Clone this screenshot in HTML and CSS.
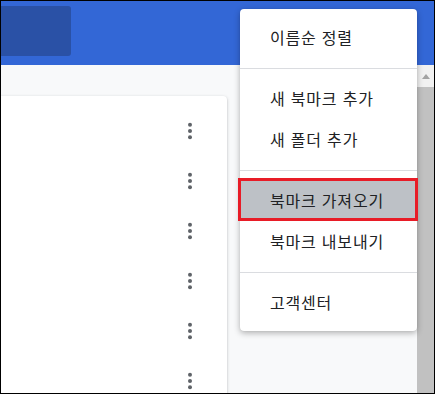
FILE: index.html
```html
<!DOCTYPE html>
<html lang="ko">
<head>
<meta charset="utf-8">
<link rel="stylesheet" href="styles.css">
</head>
<body>
<div class="frame">
  <header class="header"><div class="search"></div></header>
  <div class="main">
    <div class="content">
      <div class="card">
        <div class="row"><svg class="more" viewBox="0 0 24 24"><circle cx="12" cy="5.7" r="2"/><circle cx="12" cy="12" r="2"/><circle cx="12" cy="18.3" r="2"/></svg></div>
        <div class="row"><svg class="more" viewBox="0 0 24 24"><circle cx="12" cy="5.7" r="2"/><circle cx="12" cy="12" r="2"/><circle cx="12" cy="18.3" r="2"/></svg></div>
        <div class="row"><svg class="more" viewBox="0 0 24 24"><circle cx="12" cy="5.7" r="2"/><circle cx="12" cy="12" r="2"/><circle cx="12" cy="18.3" r="2"/></svg></div>
        <div class="row"><svg class="more" viewBox="0 0 24 24"><circle cx="12" cy="5.7" r="2"/><circle cx="12" cy="12" r="2"/><circle cx="12" cy="18.3" r="2"/></svg></div>
        <div class="row"><svg class="more" viewBox="0 0 24 24"><circle cx="12" cy="5.7" r="2"/><circle cx="12" cy="12" r="2"/><circle cx="12" cy="18.3" r="2"/></svg></div>
        <div class="row"><svg class="more" viewBox="0 0 24 24"><circle cx="12" cy="5.7" r="2"/><circle cx="12" cy="12" r="2"/><circle cx="12" cy="18.3" r="2"/></svg></div>
      </div>
    </div>
    <div class="scrollbar">
      <div class="sb-btn"><span class="sb-arrow"></span></div>
      <div class="sb-thumb"></div>
    </div>
  </div>
  <div class="menu">
    <div class="item">이름순 정렬</div>
    <div class="sep"></div>
    <div class="item">새 북마크 추가</div>
    <div class="item">새 폴더 추가</div>
    <div class="sep"></div>
    <div class="item active">북마크 가져오기</div>
    <div class="item">북마크 내보내기</div>
    <div class="sep"></div>
    <div class="item">고객센터</div>
  </div>
</div>
</body>
</html>
```

FILE: styles.css
```css
html, body {
  margin: 0;
  padding: 0;
}
body {
  font-family: "Noto Sans CJK KR", "Noto Sans", sans-serif;
  color: #202124;
}
.frame {
  position: relative;
  width: 435px;
  height: 394px;
  box-sizing: border-box;
  border: 1px solid #000;
  overflow: hidden;
  display: flex;
  flex-direction: column;
}
.header {
  height: 64px;
  flex: none;
  background: #3367d6;
  padding-top: 5px;
  box-sizing: border-box;
}
.search {
  width: 74px;
  height: 50px;
  margin-left: -4px;
  background: #2a51a6;
  border-radius: 3px;
}
.main {
  flex: 1;
  display: flex;
  min-height: 0;
}
.content {
  flex: 1;
  background: #f8f9fa;
  padding-top: 31px;
  overflow: hidden;
}
.card {
  width: 236px;
  margin-left: -10px;
  background: #fff;
  border-radius: 4px;
  box-shadow: 0 1px 3px rgba(60, 64, 67, 0.35);
  padding-top: 10px;
  height: 400px;
}
.row {
  height: 50px;
  display: flex;
  align-items: center;
  justify-content: flex-end;
  padding-right: 25px;
}
.more {
  width: 24px;
  height: 24px;
  fill: #5f6368;
}
.scrollbar {
  width: 17px;
  flex: none;
  display: flex;
  flex-direction: column;
  background: #c1c1c1;
}
.sb-btn {
  height: 22px;
  background: #f1f1f1;
  display: flex;
  align-items: center;
  justify-content: center;
}
.sb-arrow {
  width: 0;
  height: 0;
  border-left: 4.5px solid transparent;
  border-right: 4.5px solid transparent;
  border-bottom: 5px solid #a3a3a3;
  margin-left: 1px;
}
.sb-thumb {
  flex: 1;
  background: #c1c1c1;
}
.menu {
  position: absolute;
  left: 239px;
  top: 8px;
  width: 177px;
  background: #fff;
  border-radius: 4px;
  box-shadow: 0 2px 6px rgba(0, 0, 0, 0.3), 0 0 1px rgba(0, 0, 0, 0.15);
  padding: 8px 0;
}
.item {
  position: relative;
  height: 41px;
  line-height: 41px;
  padding-left: 30px;
  font-size: 16px;
  letter-spacing: 0.8px;
  white-space: nowrap;
}
.sep {
  height: 1px;
  background: #dadce0;
  margin: 10px 0 9px;
}
.item.active {
  background: #bdc1c6;
}
.item.active::after {
  content: "";
  position: absolute;
  top: -2px;
  left: -2px;
  right: -1px;
  bottom: 0;
  border: 3px solid #e81c27;
}
```
